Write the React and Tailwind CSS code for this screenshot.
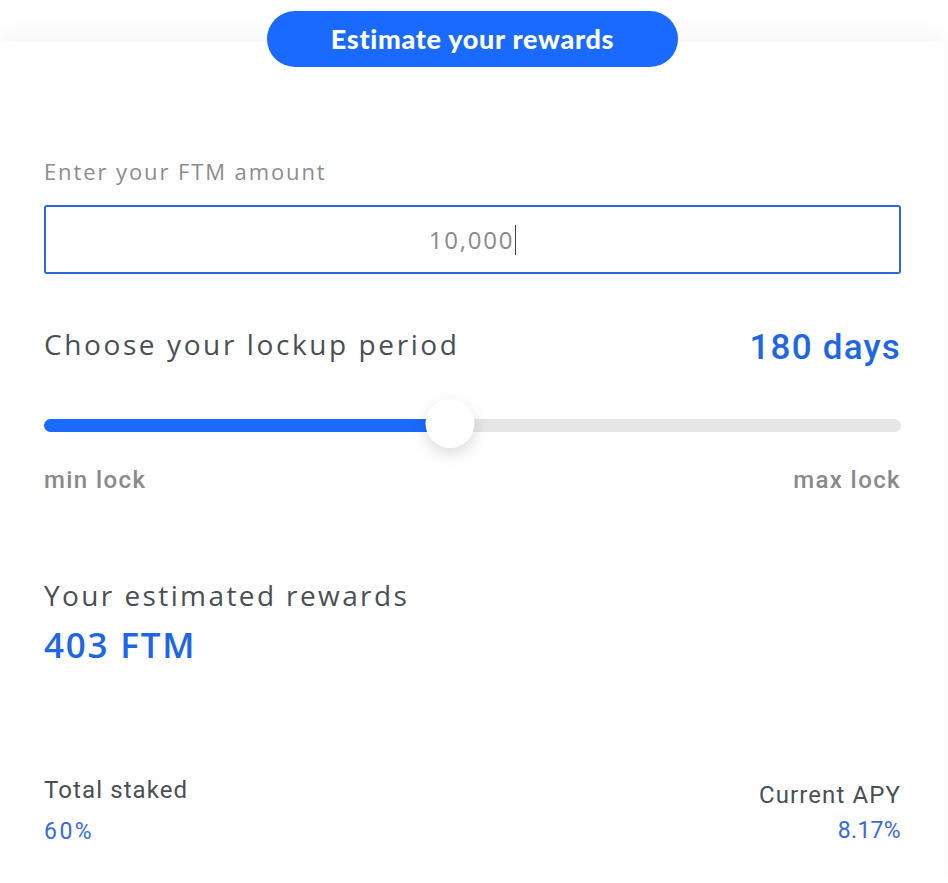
import { useState } from "react";

const roboto = { fontFamily: "Roboto, 'Liberation Sans', sans-serif" };

const App = () => {
  const [amount] = useState("10,000");
  const [days] = useState(180);
  const pct = 47.4;

  return (
    <div className="min-h-[883px] bg-white pt-[42px]" style={{ fontFamily: "'Open Sans', 'Liberation Sans', sans-serif" }}>
      <div className="relative w-[944px] bg-white shadow-[0_-10px_24px_rgba(0,0,0,0.035)] px-[44px] pt-[114px] pb-[40px] text-[#4a4f55]">
        {/* pill header */}
        <div className="absolute left-[267px] top-[-31px] flex h-[56px] w-[411px] items-center justify-center rounded-full bg-[#1a6aff]">
          <span className="text-[27px] font-black tracking-[0.7px] text-white" style={{ fontFamily: "Lato, 'Liberation Sans', sans-serif" }}>
            Estimate your rewards
          </span>
        </div>

        <div className="w-[857px]">
          <label className="block text-[22px] leading-[30px] text-[#8c8c8c] tracking-[1.9px]">Enter your FTM amount</label>
          <div className="mt-[19px] flex h-[69px] items-center justify-center rounded-[3px] border-2 border-[#2b68d9]">
            <span className="text-[24px] tracking-[1.8px] text-[#8a8a8a]">{amount}</span>
            <span className="ml-px h-[30px] w-px bg-[#444]" />
          </div>

          {/* lockup */}
          <div className="mt-[50px] flex items-start justify-between">
            <span className="text-[28px] leading-[40px] tracking-[2.6px]">Choose your lockup period</span>
            <span className="mt-[4px] text-[35px] leading-[40px] font-medium tracking-[1.2px] text-[#1f66e5]" style={roboto}>
              {days} days
            </span>
          </div>

          <div className="relative mt-[51px] h-[13px] rounded-full bg-[#e6e6e6]">
            <div className="h-full rounded-full bg-[#1a6aff]" style={{ width: pct + "%" }} />
            <div
              className="absolute top-[-20px] h-[49px] w-[49px] -translate-x-1/2 rounded-full bg-white shadow-[0_6px_16px_rgba(0,0,0,0.14)]"
              style={{ left: pct + "%" }}
            />
          </div>

          <div className="mt-[32px] flex justify-between text-[24px] leading-[33px] font-medium tracking-[1.4px] text-[#8a8a8a]" style={roboto}>
            <span>min lock</span>
            <span>max lock</span>
          </div>

          {/* rewards */}
          <div className="mt-[78px] text-[28px] leading-[40px] tracking-[2.4px]">Your estimated rewards</div>
          <div className="mt-[10px] text-[35px] leading-[40px] font-semibold tracking-[1.8px] text-[#1f66e5]">403 FTM</div>

          {/* stats */}
          <div className="mt-[110px] flex justify-between" style={roboto}>
            <div>
              <div className="text-[24px] leading-[30px] tracking-[1.1px]">Total staked</div>
              <div className="mt-[12px] text-[23px] leading-[30px] tracking-[2.5px] text-[#3a6ad8]">60%</div>
            </div>
            <div className="text-right">
              <div className="mt-[5px] text-[24px] leading-[30px] tracking-[1.1px]">Current APY</div>
              <div className="mt-[6px] text-[23px] leading-[30px] tracking-[0.3px] text-[#3a6ad8]">8.17%</div>
            </div>
          </div>
        </div>
      </div>
    </div>
  );
};

export default App;
